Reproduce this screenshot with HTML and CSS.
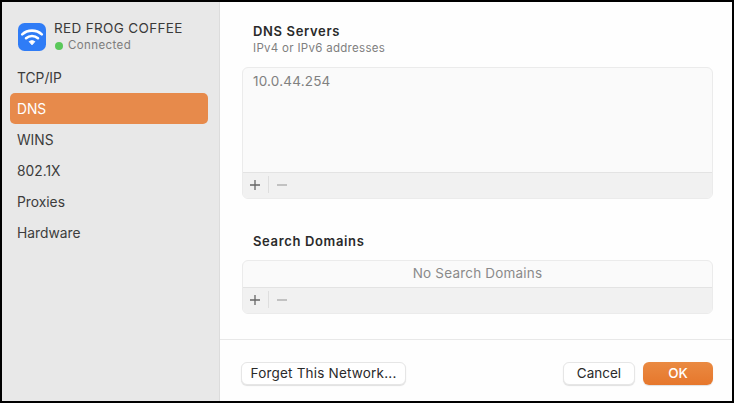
FILE: index.html
```html
<!DOCTYPE html>
<html lang="en">
<head>
<meta charset="utf-8">
<title>DNS</title>
<link rel="stylesheet" href="styles.css">
</head>
<body>
<div class="window">
  <aside class="sidebar">
    <div class="network">
      <svg class="wifi" width="30" height="30" viewBox="0 0 30 30">
        <rect x="1" y="1" width="28" height="28" rx="6.5" fill="#2f7cf6"/>
        <g fill="none" stroke="#fff" stroke-width="2.6" stroke-linecap="round">
          <path d="M5.2 12.4C10.6 7.4 19.4 7.4 24.8 12.4"/>
          <path d="M9 16.2C12.4 13.2 17.6 13.2 21 16.2"/>
        </g>
        <path d="M12.2 19.6C13.8 18.4 16.2 18.4 17.8 19.6L15 22.8Z" fill="#fff" stroke="#fff" stroke-linejoin="round"/>
      </svg>
      <div class="network-text">
        <div class="network-name">RED FROG COFFEE</div>
        <div class="network-status"><span class="dot"></span>Connected</div>
      </div>
    </div>
    <nav class="nav">
      <div class="nav-item">TCP/IP</div>
      <div class="nav-item active">DNS</div>
      <div class="nav-item">WINS</div>
      <div class="nav-item">802.1X</div>
      <div class="nav-item">Proxies</div>
      <div class="nav-item">Hardware</div>
    </nav>
  </aside>
  <main class="main">
    <div class="content">
      <section class="section">
        <h2 class="title">DNS Servers</h2>
        <p class="subtitle">IPv4 or IPv6 addresses</p>
        <div class="box">
          <div class="list list-tall">10.0.44.254</div>
          <div class="toolbar">
            <svg class="tool" width="12" height="12" viewBox="0 0 12 12"><path class="plus" d="M6 1V11M1 6H11"/></svg>
            <span class="sep"></span>
            <svg class="tool" width="12" height="12" viewBox="0 0 12 12"><path class="minus" d="M1 6H11"/></svg>
          </div>
        </div>
      </section>
      <section class="section second">
        <h2 class="title">Search Domains</h2>
        <div class="box">
          <div class="list list-empty">No Search Domains</div>
          <div class="toolbar">
            <svg class="tool" width="12" height="12" viewBox="0 0 12 12"><path class="plus" d="M6 1V11M1 6H11"/></svg>
            <span class="sep"></span>
            <svg class="tool" width="12" height="12" viewBox="0 0 12 12"><path class="minus" d="M1 6H11"/></svg>
          </div>
        </div>
      </section>
    </div>
    <footer class="footer">
      <button class="btn forget">Forget This Network...</button>
      <div class="actions">
        <button class="btn cancel">Cancel</button>
        <button class="btn ok">OK</button>
      </div>
    </footer>
  </main>
</div>
</body>
</html>
```
FILE: styles.css
```css
* { box-sizing: border-box; }
html, body { margin: 0; padding: 0; }
body {
  width: 734px;
  height: 403px;
  overflow: hidden;
  font-family: Inter, "Liberation Sans", sans-serif;
  color: #333;
  background: #000;
}
.window {
  width: 734px;
  height: 403px;
  border: 2px solid #000;
  display: flex;
  background: #fefefe;
}
.sidebar {
  width: 218px;
  flex: none;
  background: #e8e8e8;
  border-right: 1px solid #dcdcdc;
  padding: 20px 11px 0 8px;
}
.network {
  display: flex;
  align-items: center;
  gap: 7px;
  height: 30px;
  margin-left: 7px;
}
.wifi { flex: none; }
.network-name {
  font-size: 13.5px;
  letter-spacing: 0.35px;
  line-height: 16px;
  color: #3a3a3a;
  white-space: nowrap;
}
.network-status {
  display: flex;
  align-items: center;
  gap: 5px;
  font-size: 11.5px;
  letter-spacing: 0.4px;
  line-height: 17px;
  padding-top: 1px;
  color: #7d7d7d;
  margin-left: 1px;
}
.dot {
  width: 8px;
  height: 8px;
  border-radius: 50%;
  background: #5ac85a;
}
.nav { margin-top: 10px; }
.nav-item {
  height: 31px;
  padding-top: 1px;
  line-height: 30px;
  padding-left: 7px;
  font-size: 13.8px;
  color: #3c3c3c;
}
.nav-item.active {
  background: #e78a4b;
  color: #fff;
  border-radius: 5px;
}
.main {
  flex: 1;
  display: flex;
  flex-direction: column;
  min-width: 0;
}
.content {
  flex: 1;
  padding: 21px 19px 0 22px;
}
.title {
  margin: 0 0 0 11px;
  font-size: 13px;
  letter-spacing: 0.65px;
  line-height: 17px;
  font-weight: 600;
  color: #2a2a2a;
}
.subtitle {
  margin: 1px 0 0 11px;
  font-size: 11.5px;
  letter-spacing: 0.3px;
  line-height: 15px;
  color: #7f7f7f;
}
.box {
  margin-top: 11px;
  background: #fafafa;
  border: 1px solid #ebebeb;
  border-radius: 6px;
  overflow: hidden;
}
.second { margin-top: 34px; }
.second .box { margin-top: 10px; }
.list {
  font-size: 13.5px;
  letter-spacing: 0.2px;
  color: #8a8a8a;
}
.list-tall {
  height: 104px;
  padding: 4px 10px;
  line-height: 18px;
  color: #808080;
}
.list-empty {
  height: 26px;
  line-height: 24px;
  text-align: center;
}
.toolbar {
  height: 26px;
  display: flex;
  align-items: center;
  background: #f1f1f1;
  border-top: 1px solid #e3e3e3;
  padding: 0 0 2px 6px;
}
.tool {
  flex: none;
  fill: none;
  stroke-width: 1.3;
}
.plus { stroke: #666; }
.minus { stroke: #b2b2b2; }
.sep {
  width: 1px;
  height: 17px;
  margin: 0 7px;
  background: #dedede;
}
.footer {
  height: 62px;
  flex: none;
  border-top: 1px solid #e8e8e8;
  display: flex;
  justify-content: space-between;
  align-items: flex-start;
  padding: 22px 19px 0 21px;
}
.actions { display: flex; gap: 8px; }
.btn {
  height: 23px;
  border: 1px solid #e6e6e6;
  border-radius: 6px;
  background: #fff;
  box-shadow: 0 1px 1px rgba(0, 0, 0, 0.12);
  font-family: inherit;
  font-size: 13.5px;
  line-height: 20px;
  padding: 0 0 2px;
  color: #2a2a2a;
}
.forget { width: 165px; letter-spacing: 0.2px; }
.cancel { width: 72px; }
.ok {
  width: 70px;
  border: 0;
  color: #fff;
  font-weight: 500;
  background: linear-gradient(#ea8a42, #e6772c);
}
```
